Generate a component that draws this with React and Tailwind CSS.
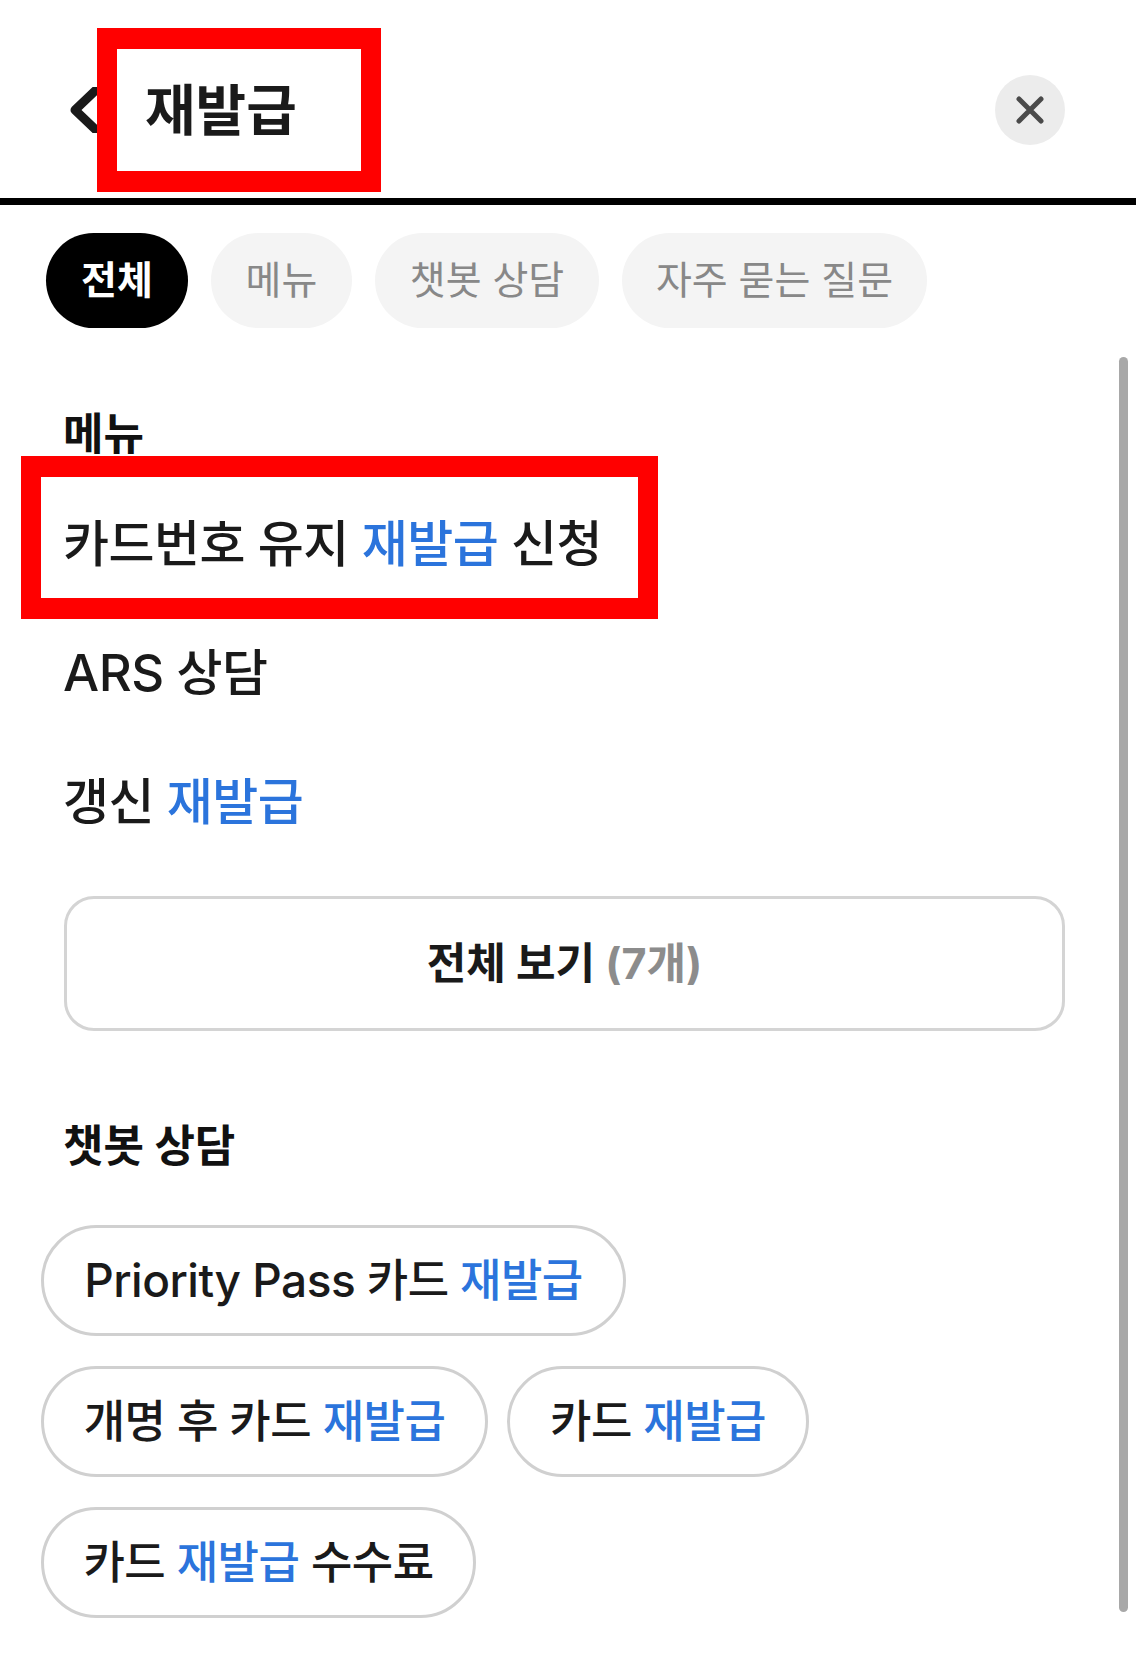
const FONT = "font-['Inter','Noto_Sans_CJK_KR',sans-serif]";

function Hl({ children }) {
  return <span className="text-[#2b74dc]">{children}</span>;
}

function Tab({ active, children, cls }) {
  return (
    <div className={`h-[95px] flex items-center justify-center rounded-full text-[39px] ${cls} ${active ? 'bg-black text-white font-bold' : 'bg-[#f4f4f4] text-[#888888]'}`}>
      {children}
    </div>
  );
}

function Row({ children, cls }) {
  return <div className={`-ml-[1px] flex items-center text-[50px] font-medium text-[#1a1a1a] tracking-[-0.5px] ${cls}`}>{children}</div>;
}

function Pill({ children, cls }) {
  return (
    <div className={`h-[111px] flex items-center justify-center rounded-full border-[3px] border-[#d0d0d0] bg-white text-[45px] font-medium text-[#1a1a1a] tracking-[-0.5px] ${cls}`}>
      {children}
    </div>
  );
}

export default function App() {
  return (
    <div className={`relative w-[1143px] h-[1660px] bg-white overflow-hidden ${FONT}`}>
      <div className="w-[1136px]">
        <header className="h-[205px] flex items-start justify-between pl-[68px] pr-[71px] pt-[75px] border-b-[7px] border-black">
          <svg width="30" height="46" viewBox="0 0 30 46" className="mt-[12px]" fill="none">
            <path d="M28 3 L7 23 L28 43" stroke="#1a1a1a" strokeWidth="9" strokeLinecap="round" strokeLinejoin="round" />
          </svg>
          <div className="w-[70px] h-[70px] rounded-full bg-[#ececec] flex items-center justify-center">
            <svg width="28" height="28" viewBox="0 0 28 28" fill="none">
              <path d="M3 3 L25 25 M25 3 L3 25" stroke="#4a4a4a" strokeWidth="5" strokeLinecap="round" />
            </svg>
          </div>
        </header>

        <div className="flex gap-[23px] pl-[46px] mt-[28px]">
          <Tab active cls="w-[142px]">전체</Tab>
          <Tab cls="w-[141px]">메뉴</Tab>
          <Tab cls="w-[224px]">챗봇 상담</Tab>
          <Tab cls="w-[305px]">자주 묻는 질문</Tab>
        </div>

        <main className="relative pl-[41px] pr-[71px] pt-[83px]">
          <div className="absolute right-[8px] top-[29px] w-[9px] h-[1255px] rounded-full bg-[#a8a8a8]" />
          <h2 className="pl-[22px] text-[44px] leading-[46px] font-bold text-[#111111]">메뉴</h2>
          <div className="pl-[23px] mt-[57px]">
            <Row cls="h-[60px]">카드번호 유지&nbsp;<Hl>재발급</Hl>&nbsp;신청</Row>
            <Row cls="h-[60px] mt-[69px]"><span className="text-[51px]">ARS</span>&nbsp;상담</Row>
            <Row cls="h-[60px] mt-[69px]">갱신&nbsp;<Hl>재발급</Hl></Row>
            <div className="mt-[64px] h-[135px] rounded-[30px] border-[3px] border-[#d4d4d4] flex items-center justify-center text-[43px] font-bold text-[#1a1a1a]">
              전체 보기&nbsp;<span className="text-[#8c8c8c]">(7개)</span>
            </div>
          </div>
          <h2 className="pl-[22px] mt-[92px] text-[44px] leading-[46px] font-bold text-[#111111]">챗봇 상담</h2>
          <div className="mt-[56px] flex flex-wrap gap-x-[19px] gap-y-[30px] w-[800px]">
            <Pill cls="w-[585px]"><span className="text-[46px]">Priority Pass</span>&nbsp;카드&nbsp;<Hl>재발급</Hl></Pill>
            <Pill cls="w-[447px]">개명 후 카드&nbsp;<Hl>재발급</Hl></Pill>
            <Pill cls="w-[302px]">카드&nbsp;<Hl>재발급</Hl></Pill>
            <Pill cls="w-[435px]">카드&nbsp;<Hl>재발급</Hl>&nbsp;수수료</Pill>
          </div>
        </main>
      </div>

      <div className="absolute left-[97px] top-[28px] w-[284px] h-[164px] border-x-[20px] border-y-[21px] border-[#ff0000] bg-white flex items-center pl-[28px] text-[55px] font-bold text-[#1a1a1a]">
        재발급
      </div>
      <div className="absolute left-[21px] top-[456px] w-[637px] h-[163px] border-x-[20px] border-y-[21px] border-[#ff0000]" />
    </div>
  );
}
